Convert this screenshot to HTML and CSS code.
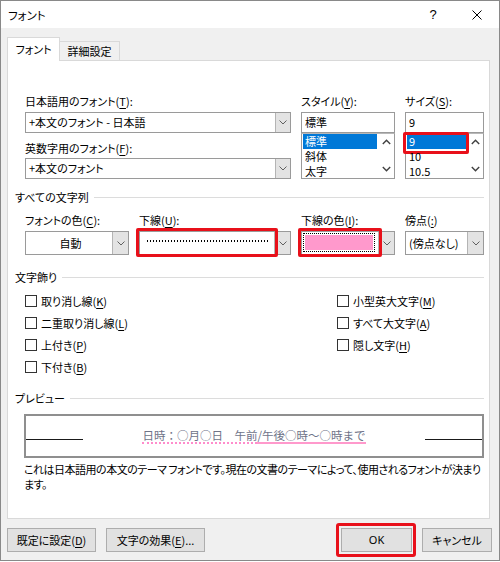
FILE: index.html
```html
<!DOCTYPE html>
<html lang="ja">
<head>
<meta charset="utf-8">
<title>フォント</title>
<link rel="stylesheet" href="styles.css">
</head>
<body>
<div class="window">
  <div class="titlebar">
    <span class="title">フォント</span>
    <span class="help">?</span>
    <span class="close"><svg width="10" height="10" viewBox="0 0 10 10"><path d="M0.5 0.5L9.5 9.5M9.5 0.5L0.5 9.5" stroke="#000" stroke-width="1" fill="none"/></svg></span>
  </div>
  <div class="tabs">
    <div class="tab active">フォント</div>
    <div class="tab">詳細設定</div>
  </div>
  <div class="panel">
    <div class="toprow">
      <div class="col">
        <div class="lbl">日本語用のフォント(<u>T</u>):</div>
        <div class="combo"><span class="val">+本文のフォント - 日本語</span><span class="arr"><svg width="8" height="5" viewBox="0 0 8 5"><path d="M0.5 0.5L4 4L7.5 0.5" fill="none" stroke="#606060"/></svg></span></div>
        <div class="lbl lbl2">英数字用のフォント(<u>F</u>):</div>
        <div class="combo"><span class="val">+本文のフォント</span><span class="arr"><svg width="8" height="5" viewBox="0 0 8 5"><path d="M0.5 0.5L4 4L7.5 0.5" fill="none" stroke="#606060"/></svg></span></div>
      </div>
      <div class="col">
        <div class="lbl">スタイル(<u>Y</u>):</div>
        <div class="textbox">標準</div>
        <div class="listbox">
          <div class="items">
            <div class="item sel">標準</div>
            <div class="item">斜体</div>
            <div class="item">太字</div>
          </div>
          <div class="sb">
            <svg width="9" height="6" viewBox="0 0 9 6"><path d="M0.8 5L4.5 1.3L8.2 5" fill="none" stroke="#404040" stroke-width="1.4"/></svg>
            <svg width="9" height="6" viewBox="0 0 9 6"><path d="M0.8 1L4.5 4.7L8.2 1" fill="none" stroke="#404040" stroke-width="1.4"/></svg>
          </div>
        </div>
      </div>
      <div class="col">
        <div class="lbl">サイズ(<u>S</u>):</div>
        <div class="textbox">9</div>
        <div class="listbox">
          <div class="items">
            <div class="item sel mark">9</div>
            <div class="item">10</div>
            <div class="item">10.5</div>
          </div>
          <div class="sb">
            <svg width="9" height="6" viewBox="0 0 9 6"><path d="M0.8 5L4.5 1.3L8.2 5" fill="none" stroke="#404040" stroke-width="1.4"/></svg>
            <svg width="9" height="6" viewBox="0 0 9 6"><path d="M0.8 1L4.5 4.7L8.2 1" fill="none" stroke="#404040" stroke-width="1.4"/></svg>
          </div>
        </div>
      </div>
    </div>

    <div class="sec sec1">すべての文字列</div>
    <div class="row2">
      <div class="col">
        <div class="lbl">フォントの色(<u>C</u>):</div>
        <div class="combo tall"><span class="val center">自動</span><span class="arr"><svg width="8" height="5" viewBox="0 0 8 5"><path d="M0.5 0.5L4 4L7.5 0.5" fill="none" stroke="#606060"/></svg></span></div>
      </div>
      <div class="col">
        <div class="lbl">下線(<u>U</u>):</div>
        <div class="combo tall mark-combo"><span class="val"><span class="dots"></span></span><span class="arr"><svg width="8" height="5" viewBox="0 0 8 5"><path d="M0.5 0.5L4 4L7.5 0.5" fill="none" stroke="#606060"/></svg></span></div>
      </div>
      <div class="col">
        <div class="lbl">下線の色(<u>I</u>):</div>
        <div class="combo tall mark-combo"><span class="val"><span class="focus"><span class="pink"></span></span></span><span class="arr"><svg width="8" height="5" viewBox="0 0 8 5"><path d="M0.5 0.5L4 4L7.5 0.5" fill="none" stroke="#606060"/></svg></span></div>
      </div>
      <div class="col">
        <div class="lbl">傍点(<u>:</u>)</div>
        <div class="combo tall"><span class="val">(傍点なし)</span><span class="arr"><svg width="8" height="5" viewBox="0 0 8 5"><path d="M0.5 0.5L4 4L7.5 0.5" fill="none" stroke="#606060"/></svg></span></div>
      </div>
    </div>

    <div class="sec sec2">文字飾り</div>
    <div class="checks">
      <div class="cb"><span class="box"></span>取り消し線(<u>K</u>)</div>
      <div class="cb"><span class="box"></span>二重取り消し線(<u>L</u>)</div>
      <div class="cb"><span class="box"></span>上付き(<u>P</u>)</div>
      <div class="cb"><span class="box"></span>下付き(<u>B</u>)</div>
      <div class="cb"><span class="box"></span>小型英大文字(<u>M</u>)</div>
      <div class="cb"><span class="box"></span>すべて大文字(<u>A</u>)</div>
      <div class="cb"><span class="box"></span>隠し文字(<u>H</u>)</div>
    </div>

    <div class="sec sec3">プレビュー</div>
    <div class="preview">
      <span class="pline"></span>
      <span class="ptext"><span class="u1">日時：○月○日　午前</span><span class="u2">/午後○時～○時まで</span></span>
      <span class="pline"></span>
    </div>
    <div class="desc">これは日本語用の本文のテーマ フォントです。現在の文書のテーマによって、使用されるフォントが決まり<br>ます。</div>
  </div>

  <div class="buttons">
    <div class="btn b1">既定に設定(<u>D</u>)</div>
    <div class="btn b2">文字の効果(<u>E</u>)...</div>
    <div class="spacer"></div>
    <div class="btn ok">OK</div>
    <div class="btn cancel">キャンセル</div>
  </div>
</div>
</body>
</html>
```

FILE: styles.css
```css
* { box-sizing: border-box; }
body {
  margin: 0;
  font-family: "Noto Sans CJK JP", "Noto Sans", sans-serif;
  font-size: 11px;
  color: #000;
  font-feature-settings: "palt";
  background: #fff;
}
u { text-decoration: underline; text-underline-offset: 2px; }

.window {
  width: 500px;
  height: 561px;
  border: 1px solid #898989;
  background: #f0f0f0;
}

.titlebar {
  height: 27px;
  background: #fff;
  display: flex;
  align-items: center;
  padding: 0 7px;
}
.title { flex: 1; font-size: 11.5px; }
.help { width: 20px; text-align: center; font-family: "Liberation Sans", sans-serif; font-size: 13px; }
.close { width: 30px; margin-left: 19px; display: flex; justify-content: center; }

.tabs {
  display: flex;
  align-items: flex-end;
  height: 23px;
  margin: 9px 0 0 6px;
}
.tab {
  border: 1px solid #d9d9d9;
  border-bottom: 0;
  text-align: center;
}
.tab.active {
  width: 53px;
  height: 24px;
  margin-bottom: -1px;
  background: #fff;
  line-height: 22px;
  position: relative;
  z-index: 1;
}
.tab:not(.active) {
  width: 60px;
  height: 19px;
  border-left: 0;
  line-height: 18px;
}

.panel {
  margin-left: 6px;
  width: 483px;
  height: 459px;
  background: #fff;
  border: 1px solid #d9d9d9;
  padding: 31px 5px 0 7px;
}

.lbl {
  display: block;
  height: 18px;
  line-height: 18px;
  white-space: nowrap;
  margin-bottom: 2px;
}
.lbl2 { margin-top: 6px; margin-bottom: 1px; }

.toprow {
  display: grid;
  grid-template-columns: 266px 94px 79px;
  column-gap: 10px;
  margin-left: 10px;
}

.combo {
  display: flex;
  height: 21px;
  border: 1px solid #9a9a9a;
  background: #fff;
  position: relative;
}
.combo.tall { height: 24px; }
.combo .val {
  flex: 1;
  padding-left: 3px;
  line-height: 19px;
  white-space: nowrap;
  overflow: hidden;
  display: flex;
}
.combo.tall .val { line-height: 22px; }
.combo .val.center { justify-content: center; }
.combo .arr {
  width: 15px;
  background: #e3e3e3;
  border-left: 1px solid #b4b4b4;
  display: flex;
  align-items: center;
  justify-content: center;
}
.row2 .combo .arr { width: 16px; }

.textbox {
  height: 21px;
  border: 1px solid #9a9a9a;
  padding-left: 3px;
  line-height: 19px;
}
.listbox {
  display: flex;
  height: 46px;
  border: 1px solid #9a9a9a;
  border-top-color: #b8b8b8;
}
.items { flex: 1; margin: 0 1px; }
.item { height: 15px; line-height: 15px; padding-left: 2px; position: relative; }
.item.sel { background: #0078d7; color: #fff; }
.sb {
  width: 16px;
  display: flex;
  flex-direction: column;
  justify-content: space-between;
  align-items: center;
  padding: 5px 0 6px;
}

.mark::after {
  content: "";
  position: absolute;
  left: -4px;
  right: -3px;
  top: -2px;
  bottom: -5px;
  border: 3px solid #e8101a;
  border-radius: 2px;
}
.mark-combo::after {
  content: "";
  position: absolute;
  left: -4px;
  right: 12px;
  top: -4px;
  bottom: -3px;
  border: 3px solid #e8101a;
  border-radius: 2px;
}

.sec {
  display: flex;
  align-items: center;
  height: 18px;
  white-space: nowrap;
}
.sec::after {
  content: "";
  flex: 1;
  height: 1px;
  background: #dcdcdc;
  margin-left: 5px;
}
.sec1 { margin-top: 9px; }
.sec2 { margin-top: 13px; }
.sec3 { margin-top: 11px; }

.row2 {
  display: grid;
  grid-template-columns: 104px 152px 94px 79px;
  column-gap: 10px;
  margin-left: 10px;
  margin-top: 5px;
}
.dots {
  width: 123px;
  height: 2px;
  margin: 8px 0 0 4px;
  background: repeating-linear-gradient(90deg, #000 0 1px, transparent 1px 3px);
}
.focus {
  flex: 1;
  display: flex;
  margin: 1px 3px 2px -2px;
  border: 1px dotted #000;
  padding: 1px;
}
.pink { flex: 1; background: #ff99cc; }

.checks {
  display: grid;
  grid-template-columns: 312px auto;
  grid-template-rows: repeat(4, 22px);
  grid-auto-flow: column;
  margin: 4px 0 0 10px;
}
.cb { display: flex; align-items: center; white-space: nowrap; }
.box {
  width: 12px;
  height: 12px;
  border: 1px solid #333;
  background: #fff;
  margin-right: 4px;
}

.preview {
  margin: 7px 0 0 9px;
  width: 460px;
  height: 44px;
  border: 2px solid #8f8f8f;
  display: flex;
  justify-content: space-between;
  align-items: flex-start;
  padding-top: 13px;
}
.pline { width: 57px; height: 1px; background: #1a1a1a; margin-top: 10px; }
.ptext {
  font-size: 11.5px;
  line-height: 13px;
  color: #6e7388;
  font-feature-settings: normal;
  white-space: nowrap;
  display: flex;
}
.u1 { border-bottom: 2px dotted #ff8ccc; }
.u2 { border-bottom: 2px solid #ff99cc; }

.desc {
  margin: 4px 0 0 9px;
  line-height: 15px;
  white-space: nowrap;
  letter-spacing: -0.5px;
}

.buttons {
  display: flex;
  margin: 9px 7px 0 6px;
  height: 24px;
}
.btn {
  height: 24px;
  border: 1px solid #adadad;
  background: #e1e1e1;
  text-align: center;
  line-height: 22px;
  white-space: nowrap;
}
.b1 { width: 89px; }
.b2 { width: 99px; margin-left: 10px; }
.spacer { flex: 1; }
.ok { width: 71px; position: relative; font-family: "Noto Sans", sans-serif; }
.ok::after {
  content: "";
  position: absolute;
  left: -6px;
  right: -5px;
  top: -6px;
  bottom: -6px;
  border: 3px solid #e8101a;
  border-radius: 3px;
}
.cancel { width: 70px; margin-left: 10px; }
```
